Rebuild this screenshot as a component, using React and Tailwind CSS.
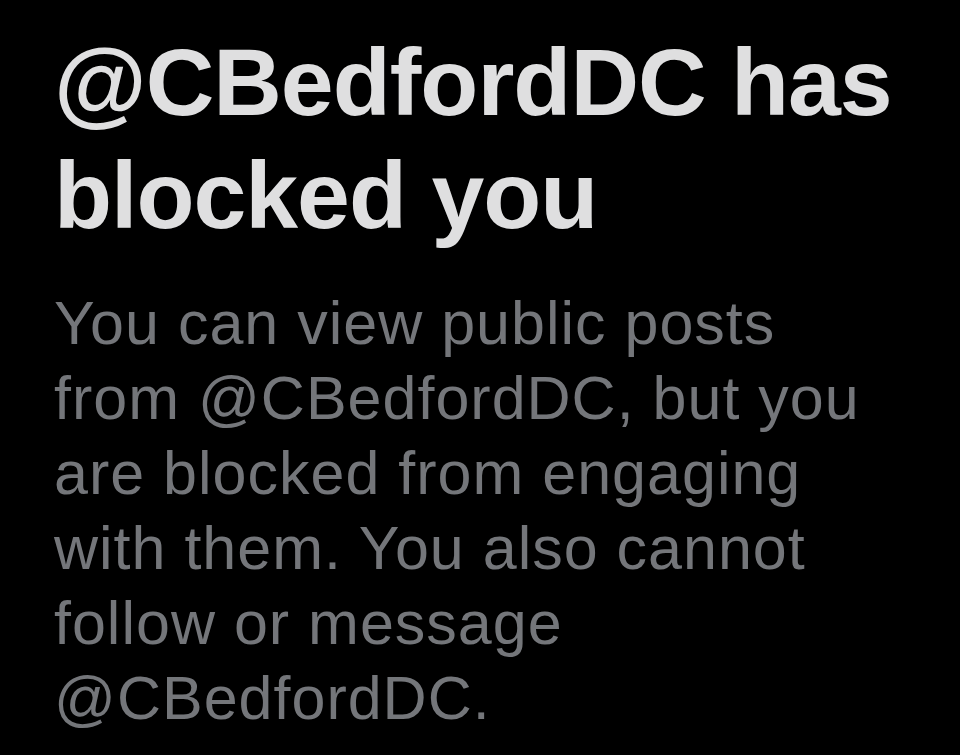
export default function App() {
  return (
    <div className="min-h-[755px] w-[960px] bg-black pl-[54px] pt-[26px] font-['Liberation_Sans',Arial,sans-serif]">
      <h1 className="text-[95px] leading-[113px] font-bold tracking-[-1px] text-[#dfdfe0]">
        @CBedfordDC has
        <br />
        blocked you
      </h1>
      <p className="mt-[34px] text-[61px] leading-[75px] tracking-[1px] text-[#74767a]">
        You can view public posts
        <br />
        from @CBedfordDC, but you
        <br />
        are blocked from engaging
        <br />
        with them. You also cannot
        <br />
        follow or message
        <br />
        @CBedfordDC.
      </p>
    </div>
  );
}
